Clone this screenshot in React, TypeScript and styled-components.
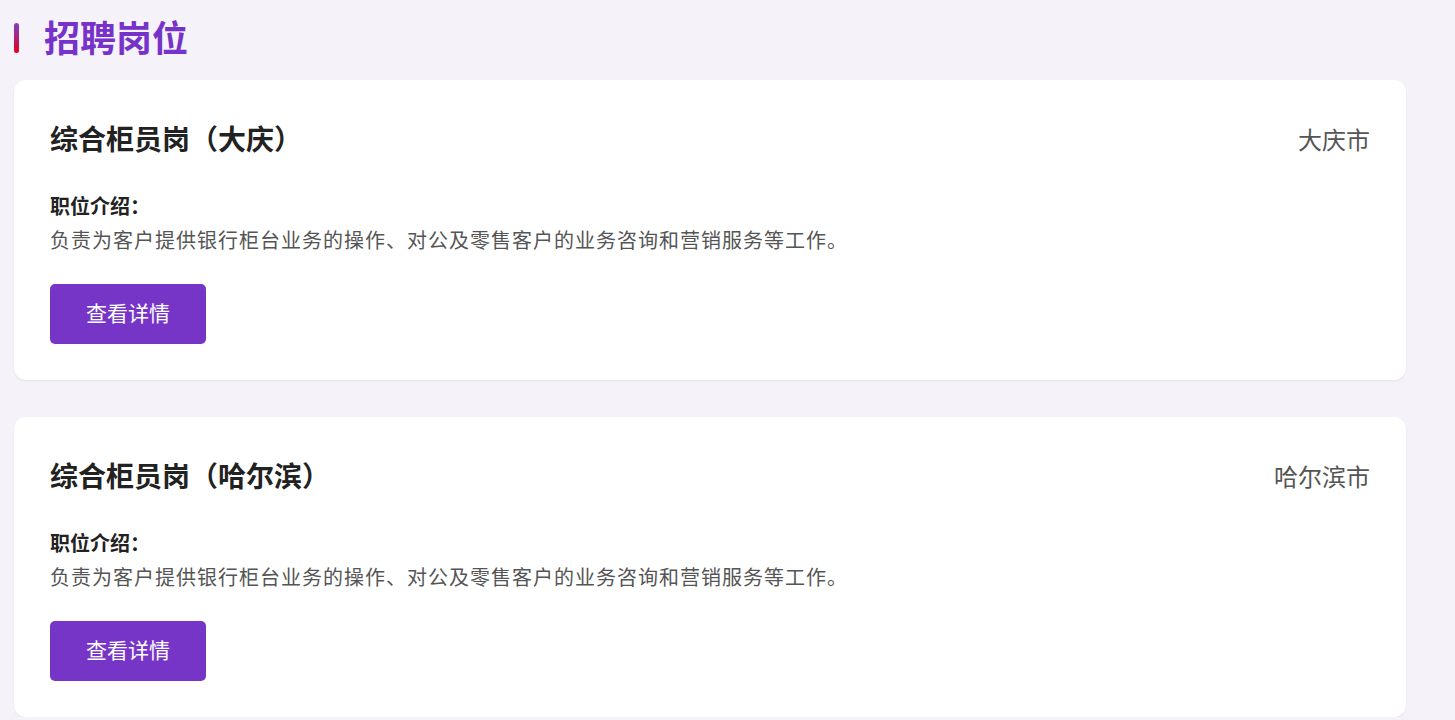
import React from 'react';
import styled, { createGlobalStyle } from 'styled-components';

const GlobalStyle = createGlobalStyle`
  html, body {
    margin: 0;
    padding: 0;
    background: #f5f3f9;
    font-family: "Noto Sans CJK SC", "Noto Sans", sans-serif;
  }
`;

const Page = styled.div`
  padding: 14px 49px 0 14px;
`;

const Header = styled.div`
  display: flex;
  align-items: center;
  height: 48px;
  gap: 25px;
  margin-bottom: 18px;
`;

const Bar = styled.div`
  width: 5px;
  height: 30px;
  border-radius: 3px;
  background: linear-gradient(180deg, #7b3fc8 0%, #e6001e 100%);
`;

const PageTitle = styled.h1`
  margin: 0;
  padding-bottom: 4px;
  font-size: 36px;
  line-height: 44px;
  font-weight: 700;
  color: #7733c9;
`;

const List = styled.div`
  display: flex;
  flex-direction: column;
  gap: 37px;
`;

const Card = styled.div`
  background: #fff;
  border-radius: 12px;
  padding: 36px;
  box-shadow: 0 1px 2px rgba(0, 0, 0, 0.08);
`;

const CardHead = styled.div`
  display: flex;
  align-items: center;
  justify-content: space-between;
  height: 48px;
  padding-bottom: 4px;
  box-sizing: border-box;
`;

const JobName = styled.div`
  font-size: 28px;
  font-weight: 700;
  color: #222;
`;

const City = styled.div`
  font-size: 24px;
  color: #555;
`;

const Label = styled.div`
  margin-top: 27px;
  font-size: 20px;
  line-height: 30px;
  font-weight: 700;
  color: #222;
`;

const Desc = styled.div`
  margin-top: 4px;
  font-size: 20px;
  line-height: 30px;
  letter-spacing: 1px;
  color: #555;
`;

const DetailButton = styled.button`
  margin-top: 29px;
  width: 156px;
  height: 60px;
  padding: 0 0 5px;
  border: none;
  border-radius: 5px;
  background: #7735c8;
  color: #fff;
  font-family: inherit;
  font-size: 21px;
  cursor: pointer;
  display: block;
`;

const jobs = [
  { name: '综合柜员岗（大庆）', city: '大庆市' },
  { name: '综合柜员岗（哈尔滨）', city: '哈尔滨市' },
];

const desc = '负责为客户提供银行柜台业务的操作、对公及零售客户的业务咨询和营销服务等工作。';

const App: React.FC = () => (
  <>
    <GlobalStyle />
    <Page>
      <Header>
        <Bar />
        <PageTitle>招聘岗位</PageTitle>
      </Header>
      <List>
        {jobs.map((job) => (
          <Card key={job.name}>
            <CardHead>
              <JobName>{job.name}</JobName>
              <City>{job.city}</City>
            </CardHead>
            <Label>职位介绍：</Label>
            <Desc>{desc}</Desc>
            <DetailButton>查看详情</DetailButton>
          </Card>
        ))}
      </List>
    </Page>
  </>
);

export default App;
